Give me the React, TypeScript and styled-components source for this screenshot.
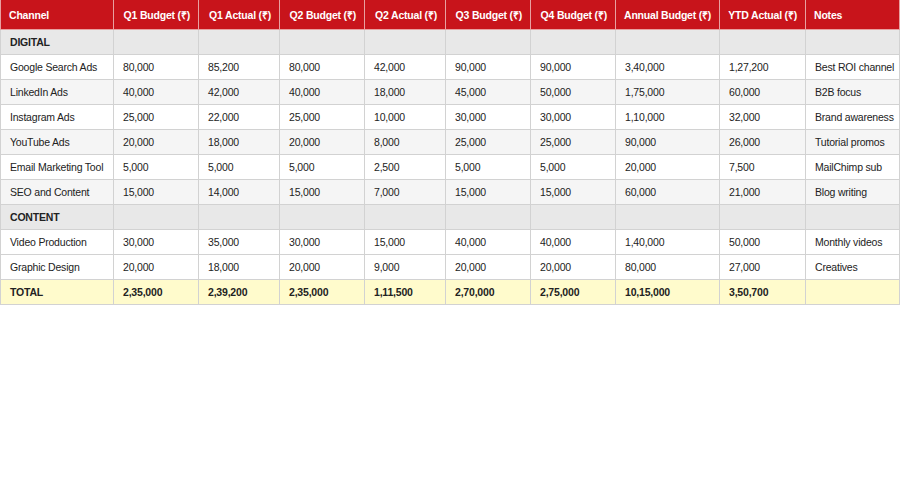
import React from "react";
import styled, { createGlobalStyle } from "styled-components";

const Global = createGlobalStyle`
  body { margin: 0; background: #fff; font-family: "Liberation Sans", Arial, sans-serif; }
`;

const Table = styled.table`
  border-collapse: collapse;
  table-layout: fixed;
  width: 900px;
  font-size: 10.5px;
  color: #222;
  letter-spacing: -0.2px;
`;

const Th = styled.th<{ $left?: boolean }>`
  background: #c8141b;
  color: #fff;
  font-weight: bold;
  height: 29px;
  padding: 0 8px;
  text-align: ${(p) => (p.$left ? "left" : "right")};
  border: 1px solid #e8a0a0;
  border-top: none;
  white-space: nowrap;
`;

const Row = styled.tr<{ $kind: "section" | "even" | "odd" | "total" }>`
  height: 25px;
  background: ${(p) =>
    p.$kind === "section" ? "#e8e8e8" : p.$kind === "total" ? "#fffbcc" : p.$kind === "odd" ? "#f5f5f5" : "#fff"};
  font-weight: ${(p) => (p.$kind === "section" || p.$kind === "total" ? "bold" : "normal")};
`;

const Td = styled.td`
  border: 1px solid #d2d2d2;
  padding: 0 9px;
  white-space: nowrap;
  overflow: hidden;
`;

const widths = [113, 85, 81, 85, 81, 85, 85, 104, 86, 94];
const headers = ["Channel", "Q1 Budget (₹)", "Q1 Actual (₹)", "Q2 Budget (₹)", "Q2 Actual (₹)", "Q3 Budget (₹)", "Q4 Budget (₹)", "Annual Budget (₹)", "YTD Actual (₹)", "Notes"];

type R = { kind: "section" | "even" | "odd" | "total"; cells: string[] };
const rows: R[] = [
  { kind: "section", cells: ["DIGITAL"] },
  { kind: "even", cells: ["Google Search Ads", "80,000", "85,200", "80,000", "42,000", "90,000", "90,000", "3,40,000", "1,27,200", "Best ROI channel"] },
  { kind: "odd", cells: ["LinkedIn Ads", "40,000", "42,000", "40,000", "18,000", "45,000", "50,000", "1,75,000", "60,000", "B2B focus"] },
  { kind: "even", cells: ["Instagram Ads", "25,000", "22,000", "25,000", "10,000", "30,000", "30,000", "1,10,000", "32,000", "Brand awareness"] },
  { kind: "odd", cells: ["YouTube Ads", "20,000", "18,000", "20,000", "8,000", "25,000", "25,000", "90,000", "26,000", "Tutorial promos"] },
  { kind: "even", cells: ["Email Marketing Tool", "5,000", "5,000", "5,000", "2,500", "5,000", "5,000", "20,000", "7,500", "MailChimp sub"] },
  { kind: "odd", cells: ["SEO and Content", "15,000", "14,000", "15,000", "7,000", "15,000", "15,000", "60,000", "21,000", "Blog writing"] },
  { kind: "section", cells: ["CONTENT"] },
  { kind: "even", cells: ["Video Production", "30,000", "35,000", "30,000", "15,000", "40,000", "40,000", "1,40,000", "50,000", "Monthly videos"] },
  { kind: "even", cells: ["Graphic Design", "20,000", "18,000", "20,000", "9,000", "20,000", "20,000", "80,000", "27,000", "Creatives"] },
  { kind: "total", cells: ["TOTAL", "2,35,000", "2,39,200", "2,35,000", "1,11,500", "2,70,000", "2,75,000", "10,15,000", "3,50,700", ""] },
];

export default function App() {
  return (
    <>
      <Global />
      <Table>
        <colgroup>
          {widths.map((w, i) => <col key={i} style={{ width: w }} />)}
        </colgroup>
        <thead>
          <tr>
            {headers.map((h, i) => <Th key={h} $left={i === 0 || i === 9}>{h}</Th>)}
          </tr>
        </thead>
        <tbody>
          {rows.map((r, i) => (
            <Row key={i} $kind={r.kind}>
              {headers.map((_, j) => <Td key={j}>{r.cells[j] ?? ""}</Td>)}
            </Row>
          ))}
        </tbody>
      </Table>
    </>
  );
}
